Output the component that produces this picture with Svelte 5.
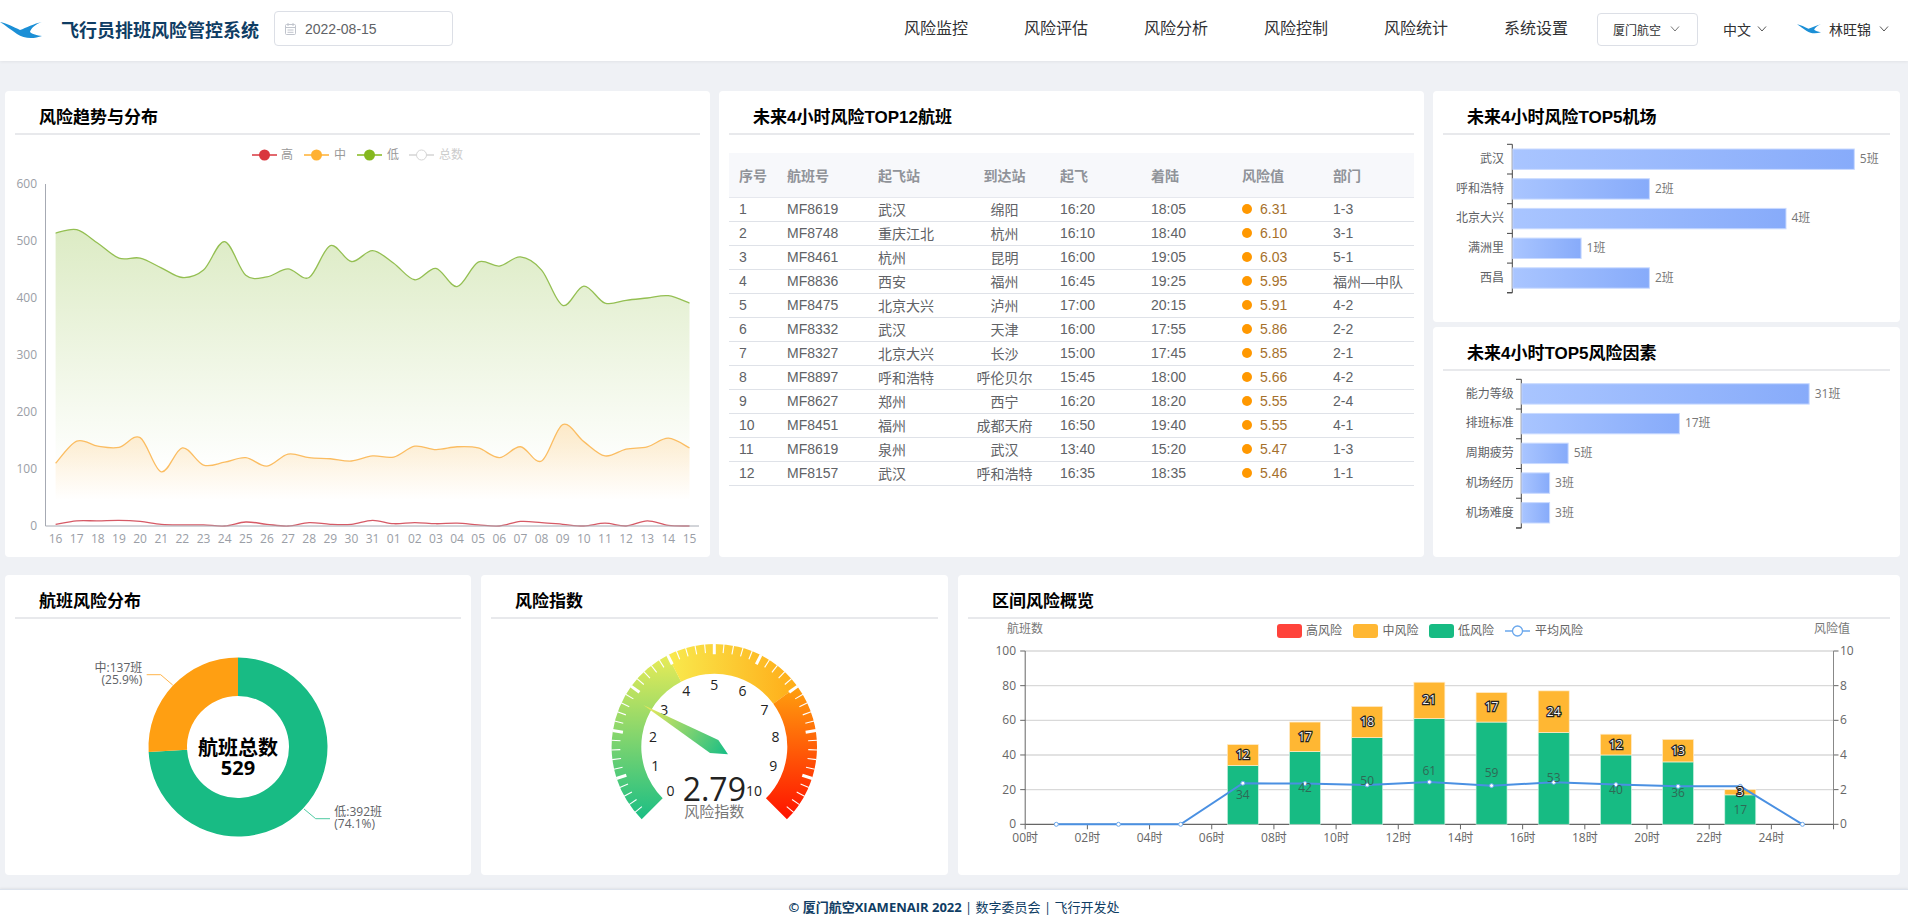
<script lang="ts">
	const nav = ['风险监控', '风险评估', '风险分析', '风险控制', '风险统计', '系统设置'];

	const flights = [
		['1', 'MF8619', '武汉', '绵阳', '16:20', '18:05', '6.31', '1-3'],
		['2', 'MF8748', '重庆江北', '杭州', '16:10', '18:40', '6.10', '3-1'],
		['3', 'MF8461', '杭州', '昆明', '16:00', '19:05', '6.03', '5-1'],
		['4', 'MF8836', '西安', '福州', '16:45', '19:25', '5.95', '福州—中队'],
		['5', 'MF8475', '北京大兴', '泸州', '17:00', '20:15', '5.91', '4-2'],
		['6', 'MF8332', '武汉', '天津', '16:00', '17:55', '5.86', '2-2'],
		['7', 'MF8327', '北京大兴', '长沙', '15:00', '17:45', '5.85', '2-1'],
		['8', 'MF8897', '呼和浩特', '呼伦贝尔', '15:45', '18:00', '5.66', '4-2'],
		['9', 'MF8627', '郑州', '西宁', '16:20', '18:20', '5.55', '2-4'],
		['10', 'MF8451', '福州', '成都天府', '16:50', '19:40', '5.55', '4-1'],
		['11', 'MF8619', '泉州', '武汉', '13:40', '15:20', '5.47', '1-3'],
		['12', 'MF8157', '武汉', '呼和浩特', '16:35', '18:35', '5.46', '1-1']
	];

	// trend chart
	const low = [514, 520, 496, 470, 470, 453, 436, 449, 499, 440, 437, 451, 436, 492, 464, 483, 461, 432, 452, 420, 463, 456, 472, 449, 387, 421, 391, 396, 400, 404, 391];
	const mid = [110, 149, 140, 138, 155, 95, 137, 107, 112, 120, 105, 126, 120, 118, 114, 123, 121, 140, 134, 139, 137, 120, 139, 114, 178, 148, 123, 135, 139, 154, 137];
	const high = [3, 9, 9, 10, 8, 3, 2, 2, 0, 7, 3, 0, 6, 3, 3, 10, 4, 6, 4, 5, 2, 0, 8, 6, 3, 0, 5, 0, 9, 1, 0];
	const days = ['16', '17', '18', '19', '20', '21', '22', '23', '24', '25', '26', '27', '28', '29', '30', '31', '01', '02', '03', '04', '05', '06', '07', '08', '09', '10', '11', '12', '13', '14', '15'];

	const tx = (i: number) => 55.6 + 21.13 * i;
	const ty = (v: number) => 526 - v * 0.57;

	function smooth(values: number[]) {
		const p = values.map((v, i) => [tx(i), ty(v)]);
		let d = `M${p[0][0]} ${p[0][1]}`;
		for (let i = 0; i < p.length - 1; i++) {
			const a = p[Math.max(i - 1, 0)];
			const b = p[i];
			const c = p[i + 1];
			const e = p[Math.min(i + 2, p.length - 1)];
			d += `C${b[0] + (c[0] - a[0]) / 6} ${b[1] + (c[1] - a[1]) / 6} ${c[0] - (e[0] - b[0]) / 6} ${c[1] - (e[1] - b[1]) / 6} ${c[0]} ${c[1]}`;
		}
		return d;
	}
	const area = (values: number[], bottom: number) => `${smooth(values)}L${tx(30)} ${bottom}L${tx(0)} ${bottom}Z`;

	const trendLegend = [
		{ x: 252, name: '高', color: '#d9363e', tx: 281 },
		{ x: 304, name: '中', color: '#ffb133', tx: 334 },
		{ x: 357, name: '低', color: '#85b81e', tx: 387 }
	];

	// bar charts
	const airports = [
		{ name: '武汉', n: 5 },
		{ name: '呼和浩特', n: 2 },
		{ name: '北京大兴', n: 4 },
		{ name: '满洲里', n: 1 },
		{ name: '西昌', n: 2 }
	];
	const factors = [
		{ name: '能力等级', n: 31 },
		{ name: '排班标准', n: 17 },
		{ name: '周期疲劳', n: 5 },
		{ name: '机场经历', n: 3 },
		{ name: '机场难度', n: 3 }
	];

	// donut
	const polar = (cx: number, cy: number, r: number, deg: number) => [
		cx + r * Math.cos((deg * Math.PI) / 180),
		cy - r * Math.sin((deg * Math.PI) / 180)
	];
	// a0 > a1, clockwise on screen
	function ring(cx: number, cy: number, r0: number, r1: number, a0: number, a1: number) {
		const large = a0 - a1 > 180 ? 1 : 0;
		const [x1, y1] = polar(cx, cy, r1, a0);
		const [x2, y2] = polar(cx, cy, r1, a1);
		const [x3, y3] = polar(cx, cy, r0, a1);
		const [x4, y4] = polar(cx, cy, r0, a0);
		return `M${x1} ${y1}A${r1} ${r1} 0 ${large} 1 ${x2} ${y2}L${x3} ${y3}A${r0} ${r0} 0 ${large} 0 ${x4} ${y4}Z`;
	}

	// gauge
	const gx = 714.3;
	const gy = 746.7;
	const gaugeTicks = Array.from({ length: 49 }, (_, k) => {
		const i = k + 1;
		const major = i % 5 === 0;
		const a = 225 - (270 * i) / 50;
		const [x1, y1] = polar(gx, gy, 103, a);
		const [x2, y2] = polar(gx, gy, major ? 92.5 : 94, a);
		return { x1, y1, x2, y2, w: major ? 3 : 1.1 };
	});
	const gaugeLabels = Array.from({ length: 11 }, (_, i) => {
		const [x, y] = polar(gx, gy, 62, 225 - 27 * i);
		return { x: i === 10 ? 754 : x, y, t: String(i) };
	});

	// combo chart
	const left = 1025.2;
	const step = 62.18;
	const base = 824.3;
	const unit = 1.733;
	const cx = (i: number) => left + step * (i + 0.5);
	const stacks = [
		{ i: 3, lo: 34, mi: 12 },
		{ i: 4, lo: 42, mi: 17 },
		{ i: 5, lo: 50, mi: 18 },
		{ i: 6, lo: 61, mi: 21 },
		{ i: 7, lo: 59, mi: 17 },
		{ i: 8, lo: 53, mi: 24 },
		{ i: 9, lo: 40, mi: 12 },
		{ i: 10, lo: 36, mi: 13 },
		{ i: 11, lo: 17, mi: 3 }
	];
	const avg = [0, 0, 0, 2.37, 2.35, 2.27, 2.44, 2.23, 2.42, 2.29, 2.19, 2.19, 0];
	const avgPts = avg.map((v, i) => [cx(i), base - v * 17.33]);
	const hours = Array.from({ length: 13 }, (_, i) => String(i * 2).padStart(2, '0') + '时');
</script>

<div class="page">
	<header class="top">
		<svg class="logo" width="42" height="17" viewBox="0 0 42 17"><path d="M0 0C6 1 14 5 20 8 26 6 34 1.5 42 0 36 2 31 6 30 10 32 12 37 13.5 42 14 34 17 24 17 17 12 11 8 5 3 0 0Z" fill="#1b8fd6"/></svg>
		<span class="brand">飞行员排班风险管控系统</span>
		<div class="date">
			<svg width="11" height="12" viewBox="0 0 11 12" fill="none" stroke="#c0c4cc"><rect x=".5" y="1.5" width="10" height="10" rx="1"/><path d="M.5 4.5h10M3 0v3M8 0v3M2.5 7h6M2.5 9.3h6"/></svg>
			<span>2022-08-15</span>
		</div>
		<nav class="nav">
			{#each nav as item}
				<span>{item}</span>
			{/each}
		</nav>
		<div class="company">
			<span>厦门航空</span>
			<svg class="chev" width="10" height="6" viewBox="0 0 10 6" fill="none" stroke="#777"><path d="M1 .5l4 4.5 4-4.5"/></svg>
		</div>
		<div class="lang">
			<span>中文</span>
			<svg class="chev" width="10" height="6" viewBox="0 0 10 6" fill="none" stroke="#555"><path d="M1 .5l4 4.5 4-4.5"/></svg>
		</div>
		<div class="user">
			<svg width="24" height="10" viewBox="0 0 42 17"><path d="M0 0C6 1 14 5 20 8 26 6 34 1.5 42 0 36 2 31 6 30 10 32 12 37 13.5 42 14 34 17 24 17 17 12 11 8 5 3 0 0Z" fill="#1b8fd6"/></svg>
			<span>林旺锦</span>
			<svg class="chev" width="10" height="6" viewBox="0 0 10 6" fill="none" stroke="#555"><path d="M1 .5l4 4.5 4-4.5"/></svg>
		</div>
	</header>

	<main class="main">
		<div class="row-a">
			<section class="card">
				<h2 class="card-head"><span>风险趋势与分布</span></h2>
				<svg class="chart" width="705" height="422" viewBox="5 135 705 422">
					<defs>
						<linearGradient id="fillLow" gradientUnits="userSpaceOnUse" x1="0" y1="229" x2="0" y2="470">
							<stop offset="0" stop-color="#dcebc4"/>
							<stop offset="1" stop-color="#dcebc4" stop-opacity="0"/>
						</linearGradient>
						<linearGradient id="fillMid" gradientUnits="userSpaceOnUse" x1="0" y1="424" x2="0" y2="500">
							<stop offset="0" stop-color="#fde9c8"/>
							<stop offset="1" stop-color="#fde9c8" stop-opacity="0"/>
						</linearGradient>
					</defs>
					{#each trendLegend as l}
						<line x1={l.x} x2={l.x + 25} y1="155" y2="155" stroke={l.color} stroke-width="1.3"/>
						<circle cx={l.x + 12.5} cy="155" r="5.5" fill={l.color}/>
						<text x={l.tx} y="159" class="legend-faint">{l.name}</text>
					{/each}
					<line x1="409" x2="434" y1="155" y2="155" stroke="#d5d5d5" stroke-width="1.3"/>
					<circle cx="421.5" cy="155" r="5" fill="#fff" stroke="#d5d5d5"/>
					<text x="439" y="159" class="legend-off">总数</text>

					<path d={area(low, 470)} fill="url(#fillLow)"/>
					<path d={area(mid, 500)} fill="url(#fillMid)"/>
					<path d={smooth(low)} fill="none" stroke="#94bf52" stroke-width="1.3"/>
					<path d={smooth(mid)} fill="none" stroke="#fbbd62" stroke-width="1.3"/>
					<path d={smooth(high)} fill="none" stroke="#d65a66" stroke-width="1.3"/>

					<path d="M45.5 184V526H699" fill="none" stroke="#a6aab3"/>
					{#each [0, 100, 200, 300, 400, 500, 600] as v}
						<text x="37" y={ty(v) + 4} text-anchor="end" class="axis-soft">{v}</text>
					{/each}
					{#each days as d, i}
						<text x={tx(i)} y="543" text-anchor="middle" class="axis-soft">{d}</text>
					{/each}
				</svg>
			</section>

			<section class="card">
				<h2 class="card-head"><span>未来4小时风险TOP12航班</span></h2>
				<table class="flights">
					<colgroup>
						<col style="width:48px" />
						{#each Array(7) as _}
							<col style="width:91px" />
						{/each}
					</colgroup>
					<thead>
						<tr>
							<th>序号</th><th>航班号</th><th>起飞站</th><th class="mid">到达站</th><th>起飞</th><th>着陆</th><th>风险值</th><th>部门</th>
						</tr>
					</thead>
					<tbody>
						{#each flights as f}
							<tr>
								<td>{f[0]}</td>
								<td>{f[1]}</td>
								<td>{f[2]}</td>
								<td class="mid">{f[3]}</td>
								<td>{f[4]}</td>
								<td>{f[5]}</td>
								<td class="risk"><i></i>{f[6]}</td>
								<td>{f[7]}</td>
							</tr>
						{/each}
					</tbody>
				</table>
			</section>

			<div class="stack">
				<section class="card airports">
					<h2 class="card-head"><span>未来4小时风险TOP5机场</span></h2>
					<svg class="chart" width="467" height="187" viewBox="1433 135 467 187">
						<defs>
							<linearGradient id="barFill">
								<stop offset="0" stop-color="#a9c5ff"/>
								<stop offset="1" stop-color="#87abfa"/>
							</linearGradient>
						</defs>
						<path d="M1507 144.3h5.3V292.7h-5.3" fill="none" stroke="#444"/>
						{#each airports as a, i}
							{@const y = 149 + i * 29.7}
							<path d={`M1507 ${144.3 + (i + 1) * 29.7}h5.3`} stroke="#444"/>
							<rect x="1512.8" y={y} width={a.n * 68.3} height="20.4" fill="url(#barFill)" stroke="#c9daff"/>
							<text x="1504" y={y + 14} text-anchor="end" class="bar-name">{a.name}</text>
							<text x={1512.8 + a.n * 68.3 + 5.5} y={y + 14} class="bar-value">{a.n}班</text>
						{/each}
					</svg>
				</section>
				<section class="card factors">
					<h2 class="card-head"><span>未来4小时TOP5风险因素</span></h2>
					<svg class="chart" width="467" height="186" viewBox="1433 371 467 186">
						<path d="M1516 379.3h5.3V528h-5.3" fill="none" stroke="#444"/>
						{#each factors as a, i}
							{@const y = 383.7 + i * 29.73}
							<path d={`M1516 ${379.3 + (i + 1) * 29.73}h5.3`} stroke="#444"/>
							<rect x="1521.8" y={y} width={a.n * 9.27} height="20.4" fill="url(#barFill)" stroke="#c9daff"/>
							<text x="1513.7" y={y + 14} text-anchor="end" class="bar-name">{a.name}</text>
							<text x={1521.8 + a.n * 9.27 + 5.5} y={y + 14} class="bar-value">{a.n}班</text>
						{/each}
					</svg>
				</section>
			</div>
		</div>

		<div class="row-b">
			<section class="card">
				<h2 class="card-head"><span>航班风险分布</span></h2>
				<svg class="chart" width="466" height="256" viewBox="5 619 466 256">
					<path d={ring(238, 747, 51, 89.5, 90, -176.8)} fill="#18bb84"/>
					<path d={ring(238, 747, 51, 89.5, 183.2, 90)} fill="#ff9f12"/>
					<text x="238" y="755" text-anchor="middle" class="donut-big">航班总数</text>
					<text x="238" y="775" text-anchor="middle" class="donut-big">529</text>
					<path d="M146.7 674.7H160.7L172.7 685" fill="none" stroke="#ffb44a"/>
					<path d="M304 809L315.7 818.7H330" fill="none" stroke="#4fcba2"/>
					<text x="142.3" y="672" text-anchor="end" class="donut-label">中:137班</text>
					<text x="142.3" y="684" text-anchor="end" class="donut-label">(25.9%)</text>
					<text x="334.3" y="816" class="donut-label">低:392班</text>
					<text x="334.3" y="828" class="donut-label">(74.1%)</text>
				</svg>
			</section>

			<section class="card">
				<h2 class="card-head"><span>风险指数</span></h2>
				<svg class="chart" width="467" height="256" viewBox="481 619 467 256">
					<defs>
						<linearGradient id="g1" gradientUnits="userSpaceOnUse" x1="0" y1="817" x2="0" y2="660">
							<stop offset="0" stop-color="#1ebf84"/>
							<stop offset="1" stop-color="#e2ea58"/>
						</linearGradient>
						<linearGradient id="g2" gradientUnits="userSpaceOnUse" x1="672" y1="0" x2="797" y2="0">
							<stop offset="0" stop-color="#f9e84c"/>
							<stop offset="1" stop-color="#ffac18"/>
						</linearGradient>
						<linearGradient id="g3" gradientUnits="userSpaceOnUse" x1="0" y1="690" x2="0" y2="817">
							<stop offset="0" stop-color="#ff9c0e"/>
							<stop offset="1" stop-color="#ff1400"/>
						</linearGradient>
						<linearGradient id="gn" gradientUnits="userSpaceOnUse" x1="650" y1="705" x2="722" y2="756">
							<stop offset="0" stop-color="#e6e75c"/>
							<stop offset="1" stop-color="#1ebf84"/>
						</linearGradient>
					</defs>
					<path d={ring(gx, gy, 73, 102.7, 225, 117)} fill="url(#g1)"/>
					<path d={ring(gx, gy, 73, 102.7, 117.1, 36)} fill="url(#g2)"/>
					<path d={ring(gx, gy, 73, 102.7, 36.1, -45)} fill="url(#g3)"/>
					{#each gaugeTicks as t}
						<line x1={t.x1} y1={t.y1} x2={t.x2} y2={t.y2} stroke="#fff" stroke-width={t.w}/>
					{/each}
					{#each gaugeLabels as l}
						<text x={l.x} y={l.y + 5} text-anchor="middle" class="gauge-num">{l.t}</text>
					{/each}
					<polygon points="643.3,705 718.3,740 728,754.3 710,753" fill="url(#gn)"/>
					<text x="714.3" y="800.7" text-anchor="middle" class="gauge-value">2.79</text>
					<text x="714.3" y="817" text-anchor="middle" class="gauge-name">风险指数</text>
				</svg>
			</section>

			<section class="card">
				<h2 class="card-head"><span>区间风险概览</span></h2>
				<svg class="chart" width="942" height="256" viewBox="958 619 942 256">
					<text x="1025" y="633" text-anchor="middle" class="axis-name">航班数</text>
					<text x="1832" y="633" text-anchor="middle" class="axis-name">风险值</text>

					<rect x="1277" y="624" width="25" height="14" rx="3" fill="#ff433b"/>
					<text x="1306" y="635" class="legend">高风险</text>
					<rect x="1353" y="624" width="25" height="14" rx="3" fill="#ffb733"/>
					<text x="1382.6" y="635" class="legend">中风险</text>
					<rect x="1429" y="624" width="25" height="14" rx="3" fill="#17bb83"/>
					<text x="1458" y="635" class="legend">低风险</text>
					<line x1="1505" x2="1530" y1="631" y2="631" stroke="#6aa7ec" stroke-width="1.5"/>
					<circle cx="1517.5" cy="631" r="5" fill="#fff" stroke="#6aa7ec" stroke-width="1.3"/>
					<text x="1535" y="635" class="legend">平均风险</text>

					{#each [0, 20, 40, 60, 80, 100] as v, i}
						{@const y = base - v * unit}
						{#if v > 0}
							<line x1={left} x2="1833.5" y1={y} y2={y} stroke="#d9d9d9" stroke-width="1.3"/>
						{/if}
						<line x1={left - 5} x2={left} y1={y} y2={y} stroke="#666"/>
						<line x1="1833.5" x2="1838.5" y1={y} y2={y} stroke="#666"/>
						<text x="1016" y={y + 4} text-anchor="end" class="axis-dark">{v}</text>
						<text x="1840" y={y + 4} class="axis-dark">{i * 2}</text>
					{/each}
					<line x1={left} x2={left} y1="651" y2={base} stroke="#666"/>
					<line x1="1833.5" x2="1833.5" y1="651" y2={base} stroke="#888"/>
					<line x1={left} x2="1833.5" y1={base} y2={base} stroke="#666" stroke-width="1.3"/>
					{#each Array(14) as _, i}
						<line x1={left + i * step} x2={left + i * step} y1={base} y2={base + 5} stroke="#666"/>
					{/each}
					{#each hours as h, i}
						<text x={left + i * step} y="842" text-anchor="middle" class="axis-dark">{h}</text>
					{/each}

					{#each stacks as s}
						<rect x={cx(s.i) - 15.5} y={base - s.lo * unit} width="31" height={s.lo * unit} fill="#17bb83" stroke="#d0f2e4" stroke-width=".7"/>
						<rect x={cx(s.i) - 15.5} y={base - (s.lo + s.mi) * unit} width="31" height={s.mi * unit} fill="#ffb733" stroke="#ffeccb" stroke-width=".7"/>
					{/each}
					<polyline points={avgPts.map((p) => p.join(',')).join(' ')} fill="none" stroke="#4a90e2" stroke-width="2"/>
					{#each avgPts as p}
						<circle cx={p[0]} cy={p[1]} r="2" fill="#fff" stroke="#6aa7ec"/>
					{/each}
					{#each stacks as s}
						<text x={cx(s.i)} y={base - (s.lo * unit) / 2 + 4} text-anchor="middle" class="bar-low">{s.lo}</text>
						<text x={cx(s.i)} y={base - (s.lo + s.mi / 2) * unit + 4} text-anchor="middle" class="bar-mid">{s.mi}</text>
					{/each}
				</svg>
			</section>
		</div>
	</main>

	<footer class="foot">
		<b>© 厦门航空XIAMENAIR 2022</b>&nbsp;| 数字委员会 | 飞行开发处
	</footer>
</div>

<style>
	:global(body) {
		margin: 0;
		background: #eff1f5;
	}
	.page {
		width: 1908px;
		height: 923px;
		overflow: hidden;
		display: flex;
		flex-direction: column;
		font-family: "Liberation Sans", "Noto Sans CJK SC", sans-serif;
		color: #303133;
	}

	.top {
		height: 61px;
		box-sizing: border-box;
		padding-bottom: 3px;
		flex: none;
		display: flex;
		align-items: center;
		background: #fff;
		box-shadow: 0 1px 3px rgba(0, 0, 0, 0.06);
	}
	.logo { margin-top: 3px; }
	.brand {
		margin-left: 19px;
		font-size: 18px;
		font-weight: 700;
		color: #0f3d64;
		white-space: nowrap;
	}
	.date {
		margin: -1px 0 0 15px;
		width: 179px;
		height: 35px;
		box-sizing: border-box;
		border: 1px solid #dcdfe6;
		border-radius: 4px;
		display: flex;
		align-items: center;
		padding-left: 10px;
		gap: 9px;
		font-size: 14px;
		color: #606266;
	}
	.nav {
		margin-left: auto;
		display: flex;
		gap: 56px;
		font-size: 16px;
		line-height: 22px;
	}
	.company {
		margin-left: 29px;
		width: 101px;
		height: 33px;
		box-sizing: border-box;
		border: 1px solid #dcdfe6;
		border-radius: 4px;
		display: flex;
		align-items: center;
		padding-left: 15px;
		gap: 9px;
		font-size: 12px;
	}
	.lang {
		margin-left: 25px;
		display: flex;
		align-items: center;
		gap: 6px;
		font-size: 14px;
	}
	.user {
		margin-left: 30px;
		margin-right: 19px;
		display: flex;
		align-items: center;
		gap: 8px;
		font-size: 14px;
	}
	.chev { flex: none; }

	.main {
		flex: none;
		padding: 30px 8px 0 5px;
	}
	.row-a {
		display: grid;
		grid-template-columns: 705px 705px 467px;
		gap: 9px;
		height: 466px;
	}
	.row-b {
		margin-top: 18px;
		display: grid;
		grid-template-columns: 466px 467px 942px;
		gap: 10px;
		height: 300px;
	}
	.card {
		background: #fff;
		border-radius: 4px;
		overflow: hidden;
	}
	.card-head {
		margin: 0 10px;
		height: 44px;
		box-sizing: border-box;
		padding: 15px 0 0 24px;
		border-bottom: 2px solid #e8e9ec;
		font-size: 17px;
		line-height: 23px;
		font-weight: 700;
		color: #000;
	}
	.stack {
		display: flex;
		flex-direction: column;
		gap: 5px;
	}
	.airports { height: 231px; }
	.factors { height: 230px; }
	.chart { display: block; }

	.flights {
		margin: 18px 0 0 10px;
		width: 685px;
		table-layout: fixed;
		border-collapse: collapse;
		font-size: 14px;
		color: #606266;
	}
	.flights th {
		height: 44px;
		box-sizing: border-box;
		padding: 0 0 0 10px;
		text-align: left;
		font-weight: 700;
		color: #909399;
		background: #f7f8fb;
		border-bottom: 1px solid #e6e8ee;
	}
	.flights td {
		height: 24px;
		box-sizing: border-box;
		padding: 0 0 1px 10px;
		border-bottom: 1px solid #dfe2e8;
		white-space: nowrap;
		overflow: hidden;
	}
	.flights .mid {
		text-align: center;
		padding-left: 0;
	}
	.risk { color: #a5702c; }
	.risk i {
		display: inline-block;
		width: 10px;
		height: 10px;
		border-radius: 50%;
		background: #ff9800;
		margin-right: 8px;
	}

	text {
		font-family: "Open Sans", "Noto Sans CJK SC", sans-serif;
		font-size: 12px;
	}
	.legend-faint { fill: #999; }
	.legend-off { fill: #ccc; }
	.axis-soft { fill: #9a9ea6; }
	.bar-name { fill: #606266; }
	.bar-value { fill: #777; }
	.donut-big {
		font-size: 20px;
		font-weight: 700;
		fill: #000;
	}
	.donut-label { fill: #606266; }
	.gauge-num {
		font-size: 14px;
		fill: #222;
	}
	.gauge-value {
		font-size: 32px;
		fill: #222;
	}
	.gauge-name {
		font-size: 15px;
		fill: #777;
	}
	.axis-name { fill: #777; }
	.legend { fill: #666; }
	.axis-dark { fill: #666; }
	.bar-low { fill: #2e6a56; }
	.bar-mid {
		fill: #f2f2f2;
		stroke: #222;
		stroke-width: 2.4px;
		paint-order: stroke;
	}

	.foot {
		margin-top: 14px;
		flex: 1;
		display: flex;
		align-items: center;
		justify-content: center;
		background: #fff;
		border-top: 1px solid #dde3ec;
		box-shadow: 0 -1px 2px rgba(0, 0, 0, 0.06);
		font-family: "Open Sans", "Noto Sans CJK SC", sans-serif;
		font-size: 13px;
		color: #0f3d64;
	}
	.foot b { font-weight: 700; }
</style>
